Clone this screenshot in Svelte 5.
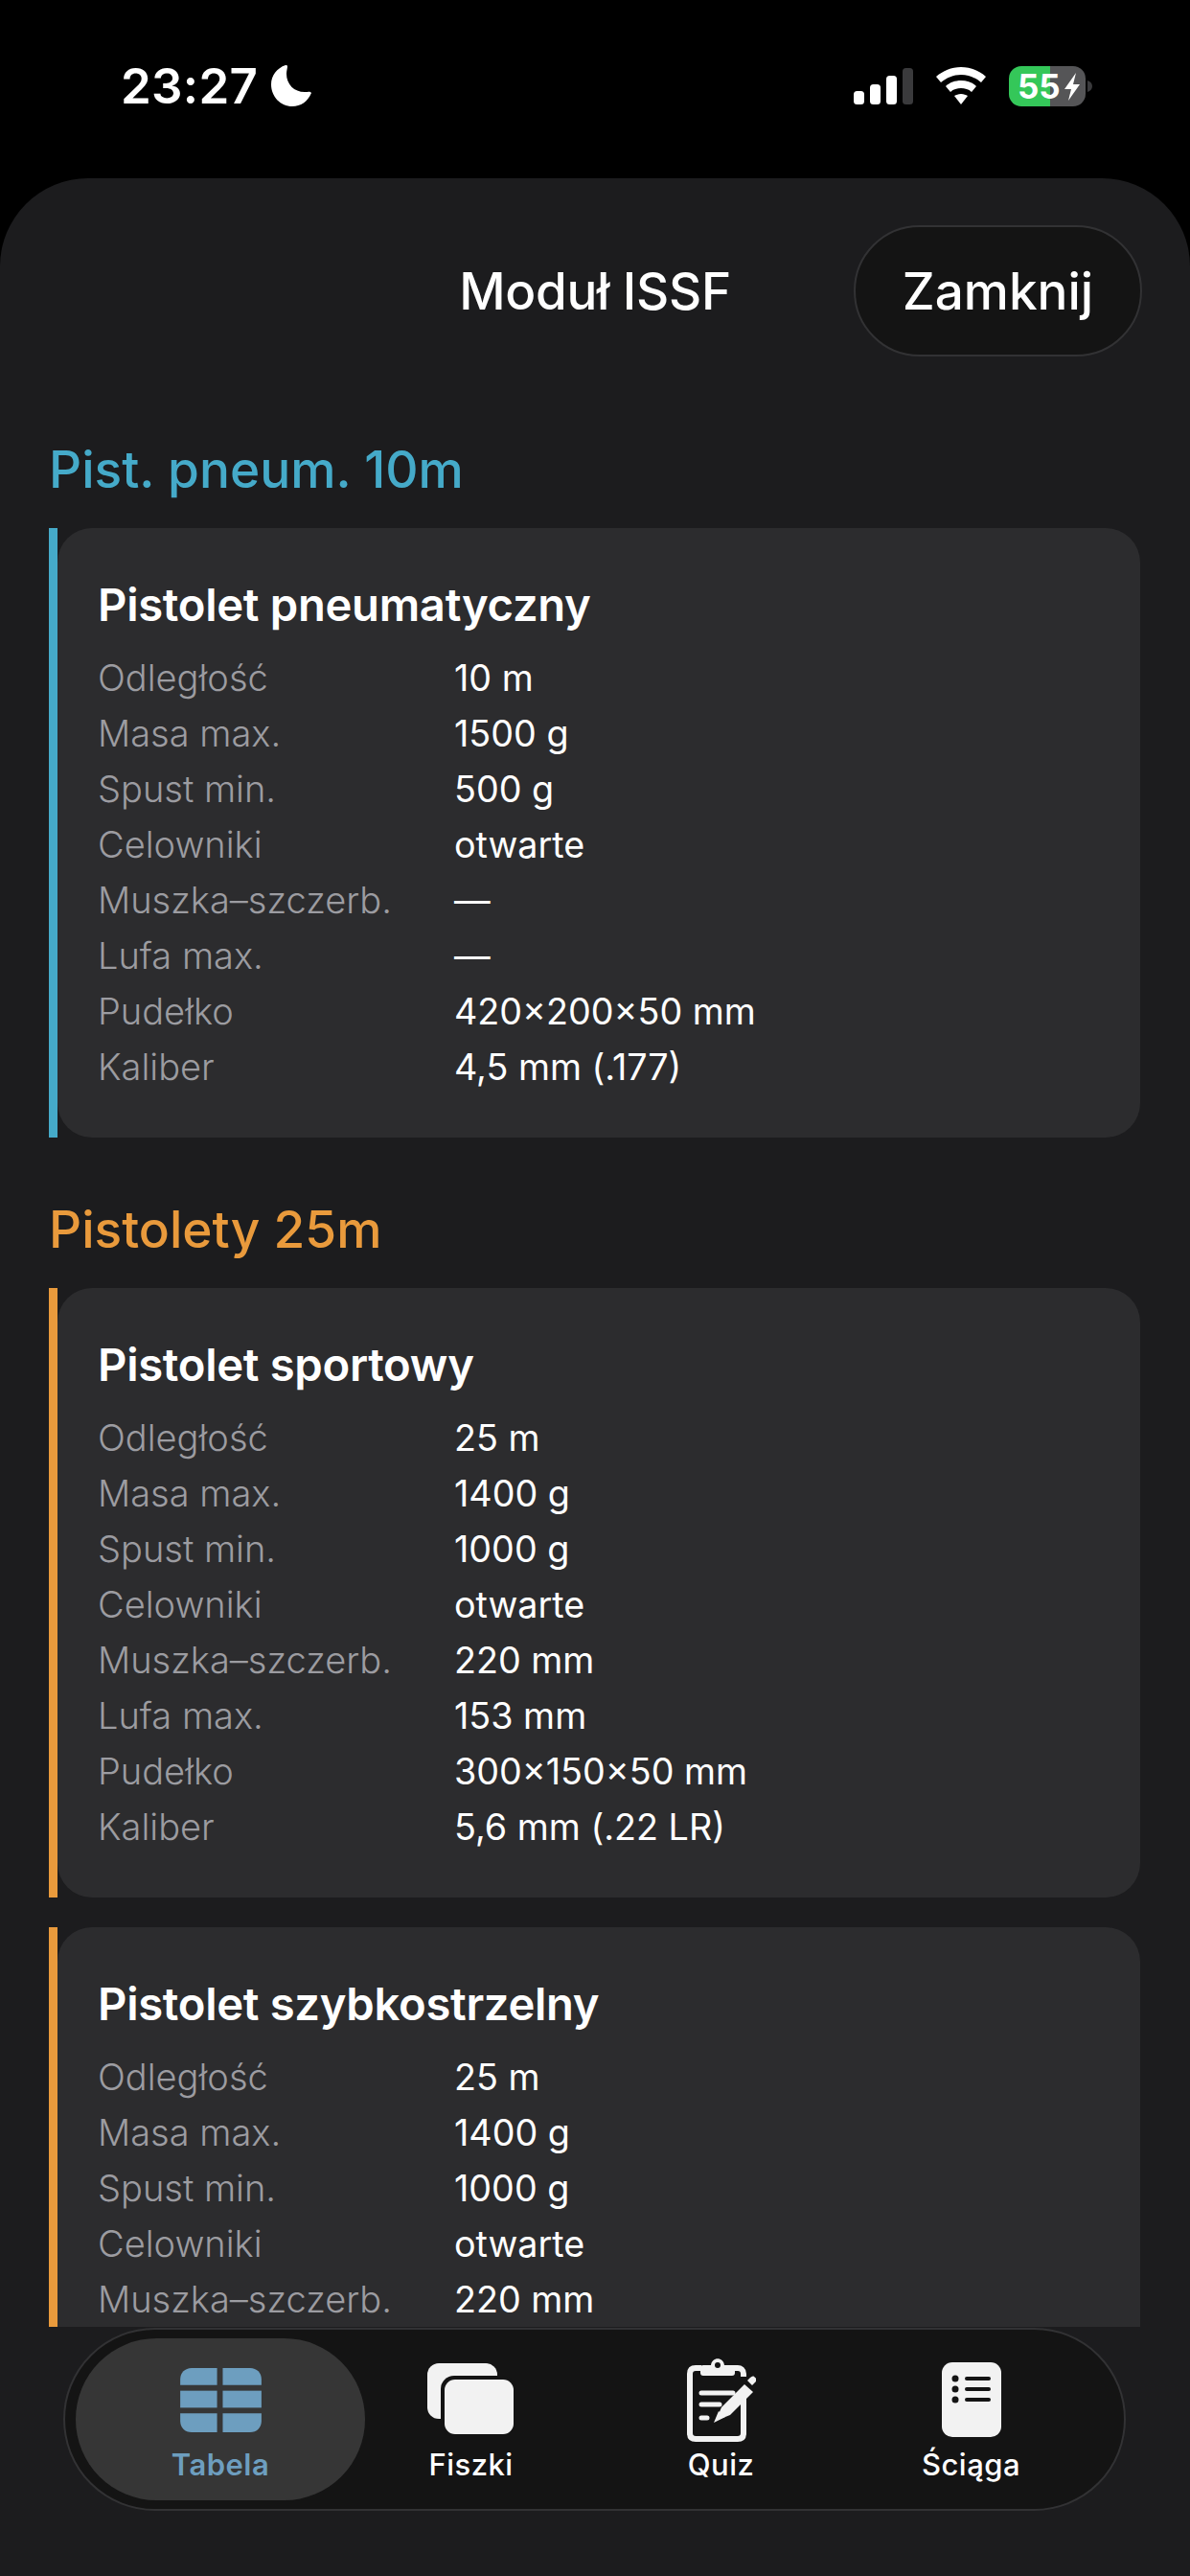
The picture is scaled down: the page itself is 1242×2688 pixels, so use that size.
<script lang="ts">
  const labels = ['Odległość', 'Masa max.', 'Spust min.', 'Celowniki', 'Muszka–szczerb.', 'Lufa max.', 'Pudełko', 'Kaliber'];

  // the third card runs under the tab bar, only its first rows are on screen
  const sections = [
    {
      title: 'Pist. pneum. 10m',
      color: '#45aac9',
      cards: [
        { name: 'Pistolet pneumatyczny', values: ['10 m', '1500 g', '500 g', 'otwarte', '—', '—', '420×200×50 mm', '4,5 mm (.177)'] }
      ]
    },
    {
      title: 'Pistolety 25m',
      color: '#e99a3c',
      cards: [
        { name: 'Pistolet sportowy', values: ['25 m', '1400 g', '1000 g', 'otwarte', '220 mm', '153 mm', '300×150×50 mm', '5,6 mm (.22 LR)'] },
        { name: 'Pistolet szybkostrzelny', values: ['25 m', '1400 g', '1000 g', 'otwarte', '220 mm'] }
      ]
    }
  ];

  const tabs = ['Tabela', 'Fiszki', 'Quiz', 'Ściąga'];
</script>

<div class="phone">
  <div class="status">
    <div class="clock">
      <span>23:27</span>
      <svg width="43" height="44" viewBox="0 0 43 44"><path d="M15 0C6 3 0 11 0 20c0 13 10 23 22 23 9 0 16-5 20-14-1-2-4-1-7-1-11 0-19-8-19-19 0-3 1-6 1-8 0-1-1-1-2-1z" fill="#fff"/></svg>
    </div>
    <div class="indicators">
      <svg width="62" height="38" viewBox="0 0 62 38">
        <rect x="0" y="24" width="11" height="14" rx="3.5" fill="#fff"/>
        <rect x="17" y="17" width="11" height="21" rx="3.5" fill="#fff"/>
        <rect x="34" y="8" width="11" height="30" rx="3.5" fill="#fff"/>
        <rect x="51" y="0" width="11" height="38" rx="3.5" fill="#3a3a3c"/>
      </svg>
      <svg width="54" height="40" viewBox="0 0 54 40">
        <path d="M27 0c10 0 19 4 26 10l-5 6c-6-5-13-8-21-8S12 11 6 16l-5-6C8 4 17 0 27 0z" fill="#fff"/>
        <path d="M27 14c6 0 12 2 16 6l-5 6c-3-3-7-4-11-4s-8 1-11 4l-5-6c4-4 10-6 16-6z" fill="#fff"/>
        <path d="M27 28c3 0 5 1 7 2l-7 9-7-9c2-1 4-2 7-2z" fill="#fff"/>
      </svg>
      <svg width="88" height="42" viewBox="0 0 88 42">
        <defs><clipPath id="batt"><rect x="0" y="0" width="80" height="42" rx="13"/></clipPath></defs>
        <g clip-path="url(#batt)">
          <rect x="0" y="0" width="43" height="42" fill="#34c759"/>
          <rect x="43" y="0" width="37" height="42" fill="#555557"/>
        </g>
        <path d="M82 15c3 1 5 3 5 6s-2 5-5 6z" fill="#3a3a3c"/>
        <text x="9" y="34" class="batt-text">55</text>
        <path d="M70 7 58 24h7l-3 12 12-17h-7z" fill="#fff"/>
      </svg>
    </div>
  </div>

  <div class="sheet">
    <header class="top">
      <div class="title">Moduł ISSF</div>
      <div class="close">Zamknij</div>
    </header>

    <div class="scroll">
      {#each sections as section}
        <section class="group">
          <h2 style="color: {section.color}">{section.title}</h2>
          {#each section.cards as card}
            <div class="card" style="border-left-color: {section.color}">
              <div class="card-body">
                <h3>{card.name}</h3>
                {#each card.values as value, i}
                  <div class="row">
                    <span class="label">{labels[i]}</span>
                    <span class="value">{value}</span>
                  </div>
                {/each}
              </div>
            </div>
          {/each}
        </section>
      {/each}
    </div>

    <nav class="tabbar">
      {#each tabs as tab, i}
        <div class="tab" class:active={i === 0}>
          <div class="icon">
            {#if i === 0}
              <svg width="85" height="67" viewBox="0 0 86 68" fill="#6d9ebf">
                <path d="M0 18V12C0 5 5 0 12 0h27v18z"/>
                <path d="M45 0h29c7 0 12 5 12 12v6H45z"/>
                <rect x="0" y="24" width="39" height="18"/>
                <rect x="45" y="24" width="41" height="18"/>
                <path d="M0 48h39v20H12C5 68 0 63 0 56z"/>
                <path d="M45 48h41v8c0 7-5 12-12 12H45z"/>
              </svg>
            {:else if i === 1}
              <svg width="92" height="76" viewBox="0 0 92 76">
                <rect x="0" y="0" width="73" height="58" rx="12" fill="#f2f2f2"/>
                <rect x="14" y="13" width="78" height="63" rx="14" fill="#141414"/>
                <rect x="18" y="17" width="72" height="57" rx="11" fill="#f2f2f2"/>
              </svg>
            {:else if i === 2}
              <svg width="72" height="88" viewBox="0 0 72 88" fill="none">
                <path d="M15 11H9c-4 0-6 2-6 6v62c0 4 2 6 6 6h44c4 0 6-2 6-6V38M47 11h6c3 0 6 2 6 6v3" stroke="#f2f2f2" stroke-width="6"/>
                <path d="M17 8h8c1-9 13-9 14 0h8c2 0 3 1 3 3v5c0 2-1 3-3 3H17c-2 0-3-1-3-3v-5c0-2 1-3 3-3z" fill="#f2f2f2"/>
                <circle cx="32" cy="8" r="3" fill="#141414"/>
                <path d="M15 37h33M15 49h19M15 63h6" stroke="#f2f2f2" stroke-width="5" stroke-linecap="round"/>
                <path d="M30 66 36 52 60 28l9 8-24 24z" fill="#f2f2f2"/>
                <path d="M28 68 40 62 33 56z" fill="#f2f2f2"/>
                <path d="M63 24l3-3c2-2 4-2 5 0 2 1 2 3 0 5l-3 3z" fill="#f2f2f2"/>
              </svg>
            {:else}
              <svg width="62" height="78" viewBox="0 0 62 78">
                <rect x="0" y="0" width="62" height="78" rx="11" fill="#f2f2f2"/>
                <g fill="#141414">
                  <circle cx="14" cy="17" r="3.5"/>
                  <circle cx="14" cy="28" r="3.5"/>
                  <circle cx="14" cy="39" r="3.5"/>
                  <rect x="24" y="15" width="27" height="4" rx="2"/>
                  <rect x="24" y="26" width="27" height="4" rx="2"/>
                  <rect x="24" y="37" width="27" height="4" rx="2"/>
                </g>
              </svg>
            {/if}
          </div>
          <span class="tab-label">{tab}</span>
        </div>
      {/each}
    </nav>
  </div>
</div>

<style>
  :global(body) {
    margin: 0;
    background: #000;
  }

  .phone {
    width: 1242px;
    height: 2688px;
    display: flex;
    flex-direction: column;
    background: #000;
    font-family: Inter, "Noto Sans", sans-serif;
    color: #fff;
    overflow: hidden;
  }

  .status {
    height: 186px;
    flex: none;
    display: flex;
    justify-content: space-between;
    align-items: flex-start;
    padding: 68px 101px 0 126px;
    box-sizing: border-box;
  }

  .clock {
    display: flex;
    align-items: center;
    gap: 14px;
    font-size: 51px;
    font-weight: 600;
    line-height: 40px;
    letter-spacing: 0.3px;
  }

  .indicators {
    display: flex;
    align-items: center;
    gap: 23px;
    padding-top: 1px;
  }

  .batt-text {
    font-family: Inter, sans-serif;
    font-size: 35px;
    font-weight: 700;
    fill: #fff;
  }

  .sheet {
    flex: 1;
    min-height: 0;
    display: flex;
    flex-direction: column;
    background: #1c1c1e;
    border-radius: 92px 92px 0 0;
  }

  .top {
    flex: none;
    display: flex;
    justify-content: flex-end;
    align-items: center;
    position: relative;
    margin: 49px 50px 0 52px;
    height: 137px;
  }

  .title {
    position: absolute;
    left: -1px;
    right: 1px;
    text-align: center;
    font-size: 53px;
    font-weight: 500;
    letter-spacing: -0.3px;
  }

  .close {
    width: 301px;
    height: 137px;
    box-sizing: border-box;
    display: flex;
    align-items: center;
    justify-content: center;
    background: #141414;
    border: 2px solid #323234;
    border-radius: 69px;
    font-size: 53px;
    font-weight: 500;
    position: relative;
  }

  .scroll {
    flex: 1;
    min-height: 0;
    overflow: hidden;
    padding: 87px 52px 0 51px;
  }

  .group {
    margin-bottom: 65px;
  }

  h2 {
    margin: 0 0 30px;
    font-size: 53.2px;
    line-height: 62px;
    font-weight: 500;
  }

  .card {
    border-left: 9px solid;
    margin-bottom: 31px;
  }

  .group .card:last-child {
    margin-bottom: 0;
  }

  .card-body {
    background: #2c2c2e;
    border-radius: 36px;
    padding: 46px 42px 45px;
  }

  h3 {
    margin: 0 0 13px;
    font-size: 47.2px;
    line-height: 68px;
    font-weight: 600;
    letter-spacing: -0.3px;
  }

  .row {
    display: flex;
    height: 58px;
    align-items: center;
    font-size: 38px;
  }

  .label {
    width: 372px;
    flex: none;
    color: #9c9ca1;
    font-weight: 300;
  }

  .value {
    color: #fff;
    font-weight: 400;
    font-size: 37.7px;
  }

  .tabbar {
    flex: none;
    height: 191px;
    box-sizing: border-box;
    margin: 1px 67px 68px 66px;
    padding: 9px 11px;
    display: flex;
    background: #141414;
    border: 2px solid #323234;
    border-radius: 96px;
  }

  .tab {
    width: 261px;
    flex: none;
    display: flex;
    flex-direction: column;
    align-items: center;
    font-size: 31px;
    font-weight: 500;
  }

  .tab.active {
    width: 302px;
    margin-right: -20px;
    background: #363636;
    border-radius: 85px;
    color: #6d9ebf;
    font-weight: 600;
  }

  .icon {
    height: 100px;
    margin-top: 14px;
    display: flex;
    align-items: center;
    justify-content: center;
  }

  .tab-label {
    line-height: 36px;
    letter-spacing: 0.5px;
  }
</style>
